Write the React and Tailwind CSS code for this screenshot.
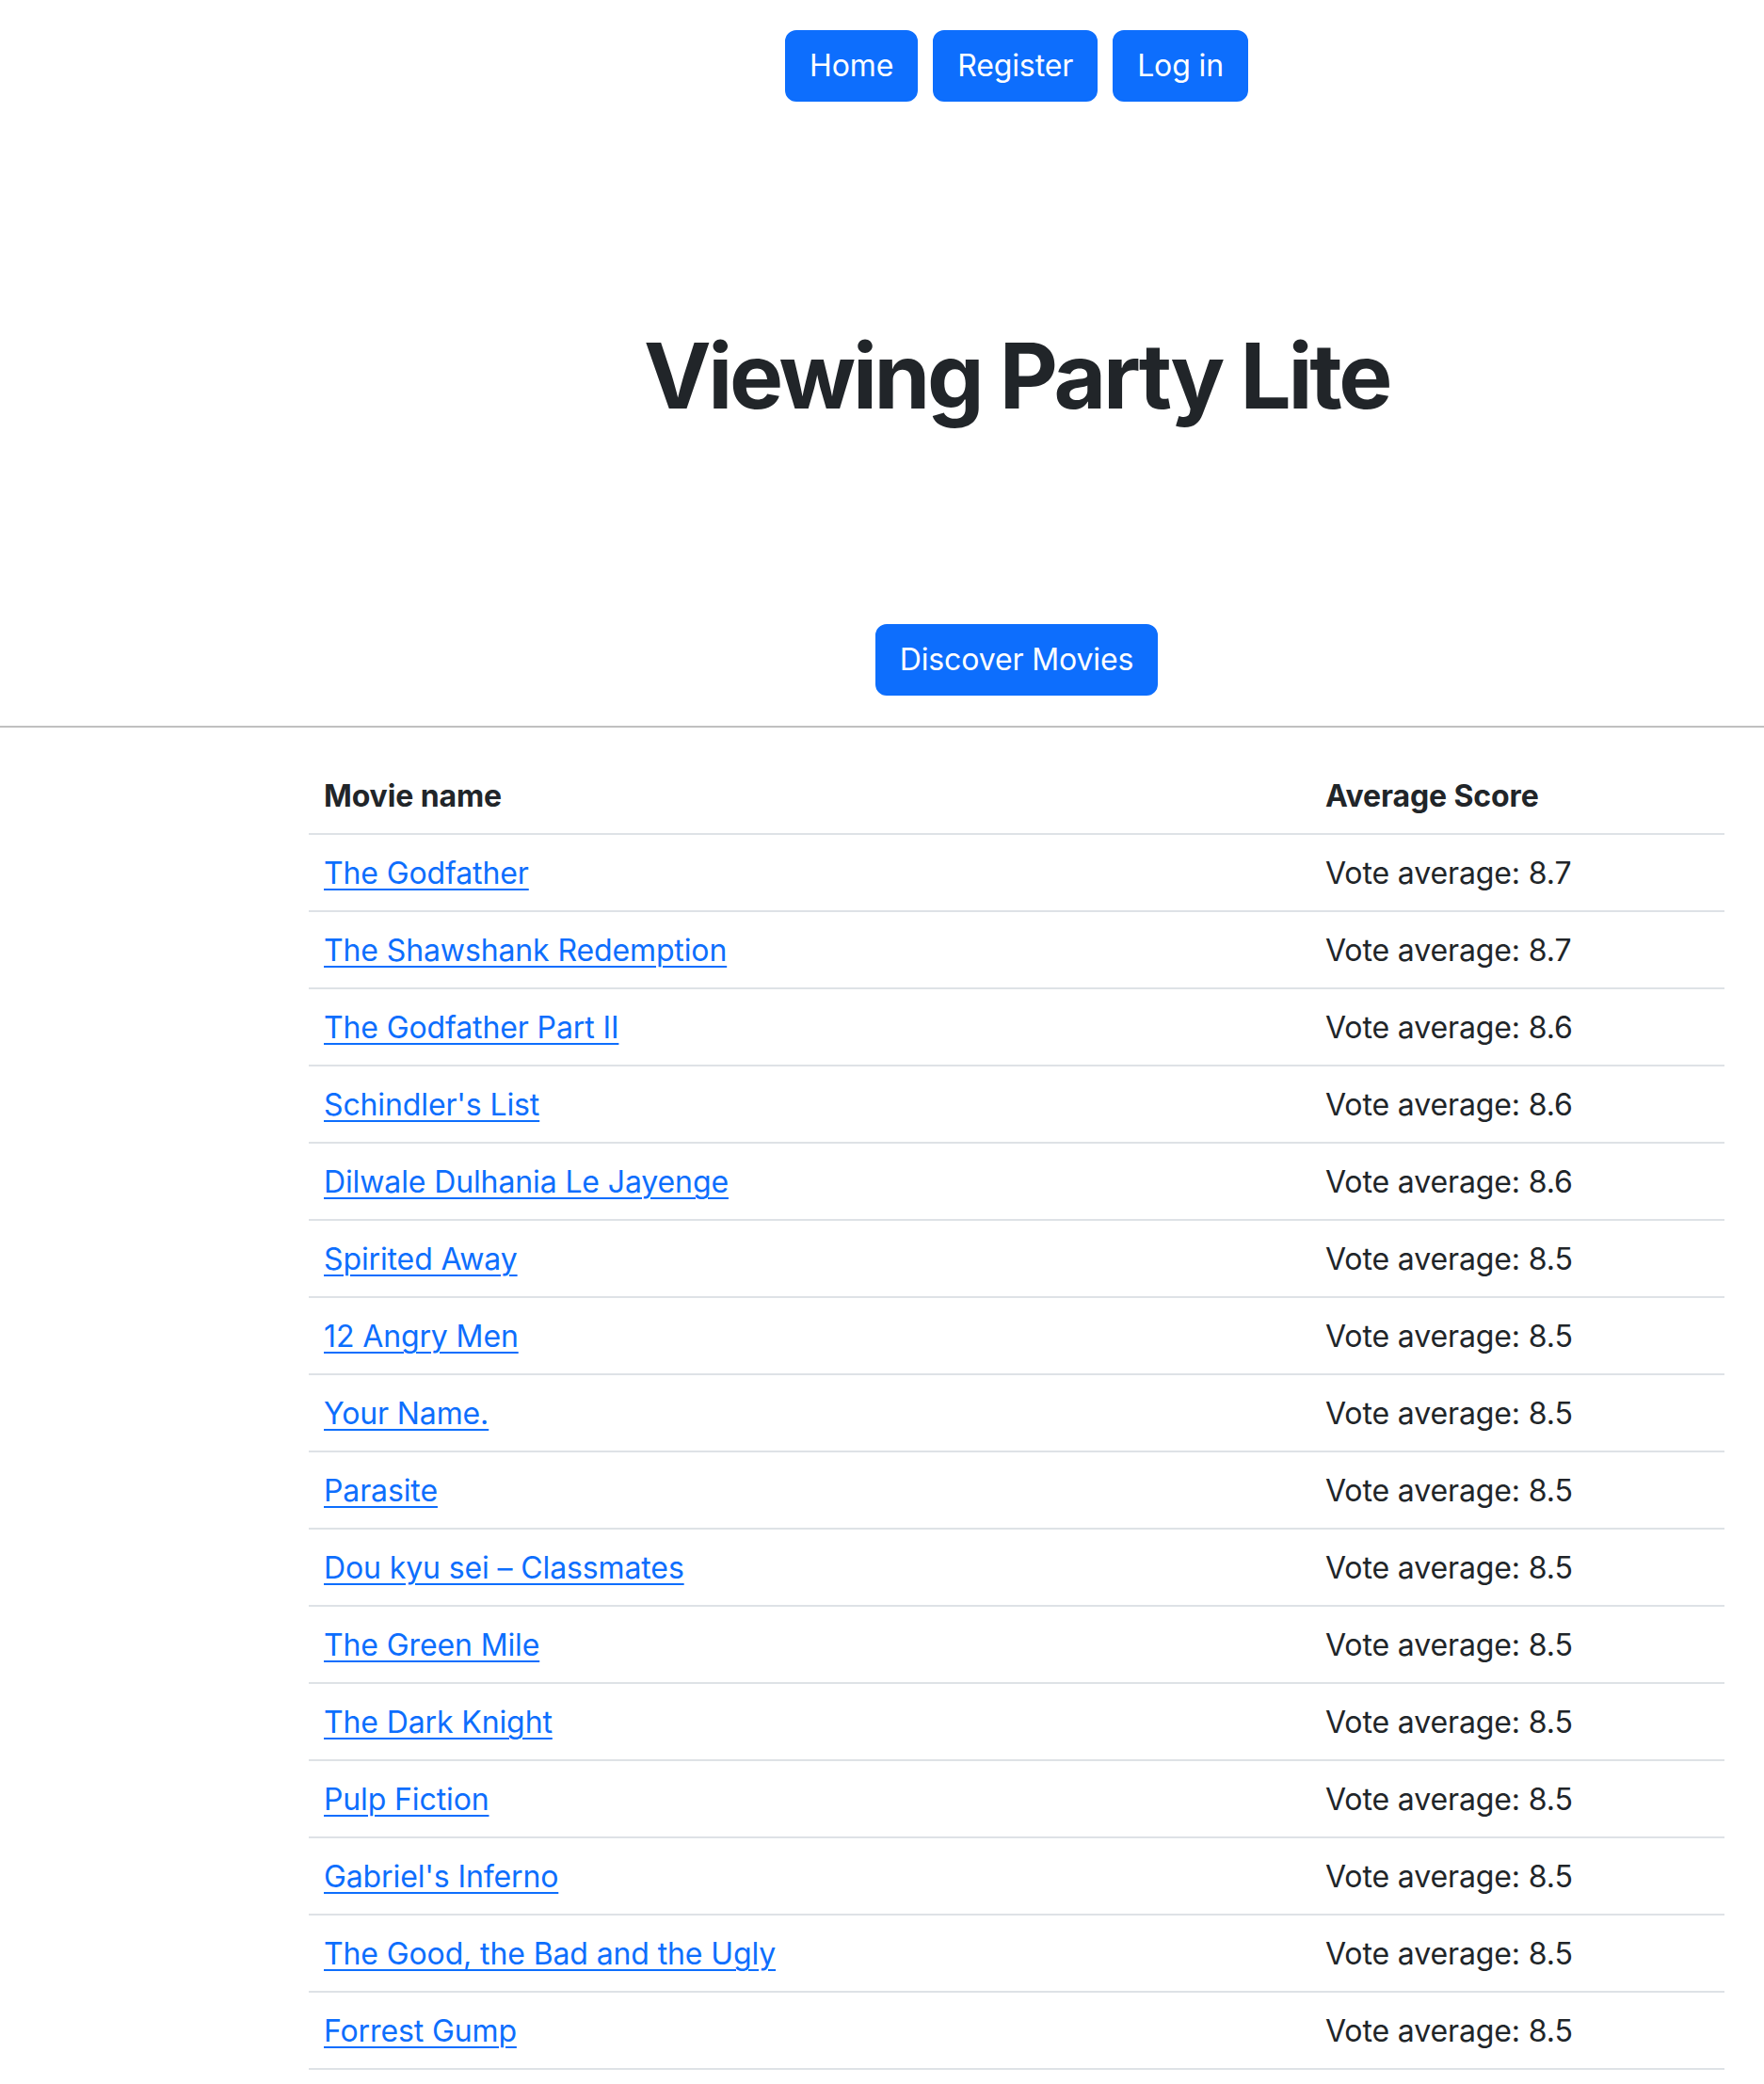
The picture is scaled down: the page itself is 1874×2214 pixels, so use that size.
import React from "react";

const movies = [
  { title: "The Godfather", score: "8.7" },
  { title: "The Shawshank Redemption", score: "8.7" },
  { title: "The Godfather Part II", score: "8.6" },
  { title: "Schindler's List", score: "8.6" },
  { title: "Dilwale Dulhania Le Jayenge", score: "8.6" },
  { title: "Spirited Away", score: "8.5" },
  { title: "12 Angry Men", score: "8.5" },
  { title: "Your Name.", score: "8.5" },
  { title: "Parasite", score: "8.5" },
  { title: "Dou kyu sei – Classmates", score: "8.5" },
  { title: "The Green Mile", score: "8.5" },
  { title: "The Dark Knight", score: "8.5" },
  { title: "Pulp Fiction", score: "8.5" },
  { title: "Gabriel's Inferno", score: "8.5" },
  { title: "The Good, the Bad and the Ugly", score: "8.5" },
  { title: "Forrest Gump", score: "8.5" },
];

const btn =
  "h-[76px] px-[24px] rounded-[12px] bg-[#0d6efd] text-white text-[32px] leading-[48px] border-2 border-[#0d6efd]";

export default function App() {
  return (
    <div className="min-h-screen bg-white text-[#212529] tracking-[-0.12px] font-['Inter',sans-serif]">
      {/* top nav */}
      <div className="pl-[328px] pr-[42px] pt-[32px] flex justify-center gap-[16px]">
        <button className={btn}>Home</button>
        <button className={btn}>Register</button>
        <button className={btn}>Log in</button>
      </div>

      <div className="pl-[328px] pr-[42px] text-center">
        <h1 className="mt-[234px] text-[96px] leading-[1.2] font-bold tracking-[-3.3px]">
          Viewing Party Lite
        </h1>
        <div className="mt-[206px] flex justify-center">
          <button className={btn}>Discover Movies</button>
        </div>
      </div>

      <hr className="mt-[32px] border-0 border-t-2 border-[#c0c0c0]" />

      {/* movie table */}
      <div className="pl-[328px] pr-[42px] mt-[32px]">
        <table className="w-full border-collapse text-left text-[32px] leading-[48px]">
          <thead>
            <tr>
              <th className="w-[1064px] px-[16px] pt-[17px] pb-[15px] font-bold border-b-2 border-[#dee2e6]">
                Movie name
              </th>
              <th className="px-[16px] pt-[17px] pb-[15px] font-bold border-b-2 border-[#dee2e6]">
                Average Score
              </th>
            </tr>
          </thead>
          <tbody>
            {movies.map((m, i) => (
              <tr key={i}>
                <td className="px-[16px] pt-[17px] pb-[15px] border-b-2 border-[#dee2e6]">
                  <a href="#" className="text-[#0d6efd] underline decoration-2 underline-offset-[5px]">
                    {m.title}
                  </a>
                </td>
                <td className="px-[16px] pt-[17px] pb-[15px] border-b-2 border-[#dee2e6]">
                  Vote average: {m.score}
                </td>
              </tr>
            ))}
          </tbody>
        </table>
      </div>
    </div>
  );
}
